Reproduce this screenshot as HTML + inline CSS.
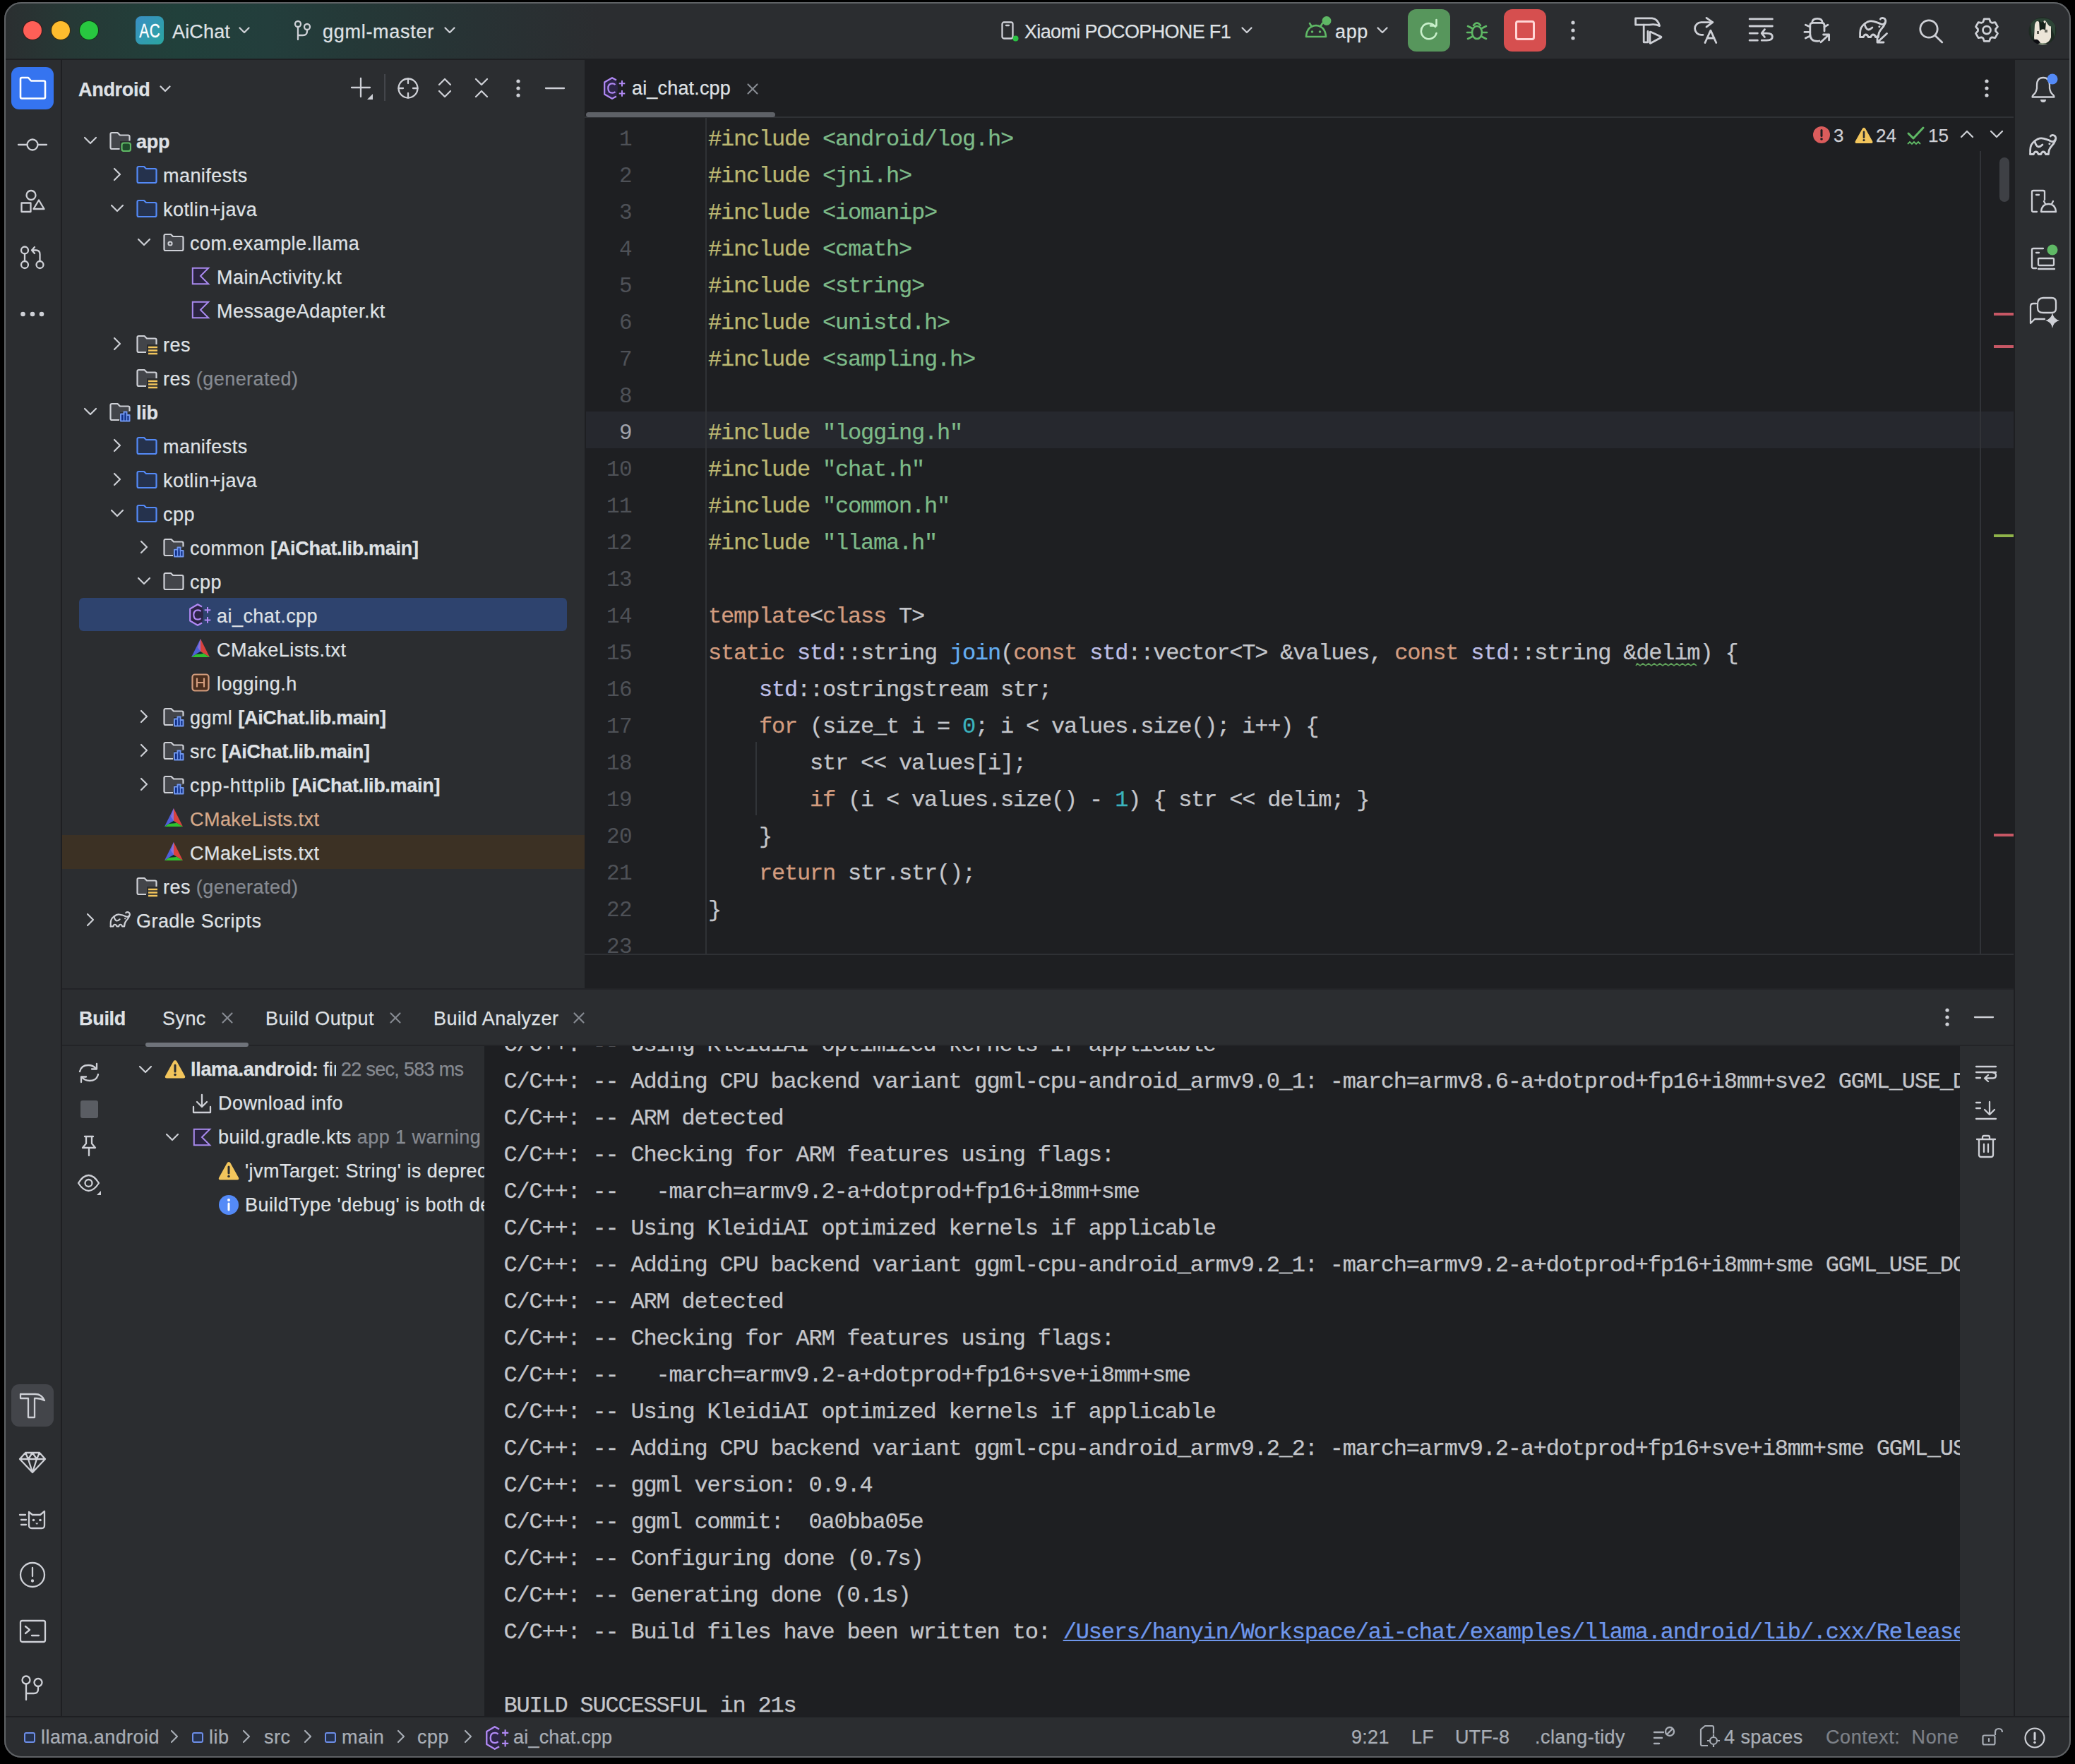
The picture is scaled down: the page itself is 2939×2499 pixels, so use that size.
<!DOCTYPE html>
<html><head><meta charset="utf-8">
<style>
*{box-sizing:border-box;margin:0;padding:0}
html,body{width:2939px;height:2499px;background:#000;overflow:hidden}
body{position:relative;font-family:"Liberation Sans",sans-serif;color:#DFE1E5}
#app{position:absolute;left:0;top:0;width:2939px;height:2499px;clip-path:inset(3px 6px 9px 6px round 24px);background:#2B2D30}
#frame{position:absolute;left:6px;top:3px;width:2927px;height:2487px;border:2px solid #5f6265;border-radius:24px;pointer-events:none}
.a{position:absolute}
.ui{font-family:"Liberation Sans",sans-serif;font-size:27px;letter-spacing:0.5px;white-space:pre;line-height:48px;-webkit-text-stroke:0.25px currentColor}
.mono{font-family:"Liberation Mono",monospace;font-size:32px;letter-spacing:-1.2px;white-space:pre;line-height:52px;-webkit-text-stroke:0.25px currentColor}
svg{position:absolute;overflow:visible}
.ic{fill:none;stroke:#CED0D6;stroke-width:2.3;stroke-linecap:round;stroke-linejoin:round}
</style></head><body>
<div id="app">
<!-- title bar -->
<div class="a" id="title" style="left:0;top:0;width:2939px;height:84px;background:linear-gradient(90deg,#2B2E30 0px,#263936 100px,#21403B 250px,#233E3C 380px,#253837 520px,#283234 680px,#2B2D30 850px)"></div>
<div class="a" style="left:0;top:83px;width:2939px;height:2px;background:#1E1F22"></div>
<!-- left strip -->
<div class="a" style="left:0;top:85px;width:86px;height:2346px;background:#2B2D30"></div>
<div class="a" style="left:86px;top:85px;width:2px;height:2346px;background:#1E1F22"></div>
<!-- project panel -->
<div class="a" style="left:88px;top:85px;width:740px;height:1314px;background:#2B2D30"></div>
<!-- editor -->
<div class="a" style="left:828px;top:85px;width:2024px;height:1315px;background:#1E1F22"></div>
<!-- right strip -->
<div class="a" style="left:2852px;top:85px;width:2px;height:2346px;background:#1E1F22"></div>
<div class="a" style="left:2854px;top:85px;width:85px;height:2346px;background:#2B2D30"></div>
<!-- build panel -->
<div class="a" style="left:88px;top:1400px;width:2764px;height:1031px;background:#2B2D30"></div>
<div class="a" style="left:686px;top:1482px;width:2090px;height:949px;background:#1E1F22"></div>
<!-- status bar -->
<div class="a" style="left:0;top:2431px;width:2939px;height:2px;background:#1E1F22"></div>
<div class="a" style="left:0;top:2433px;width:2939px;height:66px;background:#2B2D30"></div>
<!-- traffic lights -->
<div class="a" style="left:33px;top:30px;width:26px;height:26px;border-radius:50%;background:#FF5F57;box-shadow:0 0 0 1px #3a1b1a"></div>
<div class="a" style="left:73px;top:30px;width:26px;height:26px;border-radius:50%;background:#FEBC2E;box-shadow:0 0 0 1px #3a2c10"></div>
<div class="a" style="left:113px;top:30px;width:26px;height:26px;border-radius:50%;background:#28C840;box-shadow:0 0 0 1px #113a18"></div>
<!-- project icon -->
<div class="a" style="left:192px;top:23px;width:40px;height:40px;border-radius:8px;background:linear-gradient(135deg,#3A8EC4 0%,#2AA6A0 100%)"></div>
<div class="a" style="left:192px;top:24px;width:40px;height:40px;font:28px/40px 'Liberation Sans';color:#fff;text-align:center;letter-spacing:1px;transform:scaleX(0.74);-webkit-text-stroke:0.4px #fff">AC</div>
<div class="a ui" style="left:244px;top:22.5px;line-height:44px;letter-spacing:0.16px">AiChat</div>
<svg style="left:338px;top:38px" width="16" height="10"><path class="ic" d="M1.5 1.5 L8 8 L14.5 1.5" stroke-width="2.4"/></svg>
<svg style="left:416px;top:28px" width="26" height="30"><g class="ic" stroke-width="2.4"><circle cx="6" cy="6" r="4"/><circle cx="19" cy="10" r="4"/><path d="M6 10 V28 M6 22 H13 Q19 22 19 16 V14"/></g></svg>
<div class="a ui" style="left:457px;top:22.5px;line-height:44px;letter-spacing:0.72px">ggml-master</div>
<svg style="left:629px;top:38px" width="16" height="10"><path class="ic" d="M1.5 1.5 L8 8 L14.5 1.5" stroke-width="2.4"/></svg>
<!-- device -->
<svg style="left:1418px;top:30px" width="26" height="28"><rect class="ic" x="1.5" y="1.5" width="15" height="23" rx="2.5" stroke-width="2.4"/><path class="ic" d="M7 6 H11" stroke-width="2.2"/><circle cx="20.5" cy="24.5" r="4" fill="#2BC244"/></svg>
<div class="a ui" style="left:1451px;top:22.5px;line-height:44px;letter-spacing:-0.66px">Xiaomi POCOPHONE F1</div>
<svg style="left:1758px;top:38px" width="16" height="10"><path class="ic" d="M1.5 1.5 L8 8 L14.5 1.5" stroke-width="2.4"/></svg>
<!-- android app -->
<svg style="left:1846px;top:20px" width="40" height="36"><path d="M4 32 Q5 17 18 16 Q31 17 32 32 Z" fill="none" stroke="#5FB865" stroke-width="2.6" stroke-linejoin="round"/><path d="M9 13 L12 18 M27 13 L24 18" stroke="#5FB865" stroke-width="2.6" stroke-linecap="round"/><circle cx="12.5" cy="25" r="1.8" fill="#5FB865"/><circle cx="23.5" cy="25" r="1.8" fill="#5FB865"/><circle cx="33" cy="9.5" r="6.5" fill="#5FB865"/></svg>
<div class="a ui" style="left:1891px;top:22.5px;line-height:44px;letter-spacing:0.65px">app</div>
<svg style="left:1950px;top:38px" width="16" height="10"><path class="ic" d="M1.5 1.5 L8 8 L14.5 1.5" stroke-width="2.4"/></svg>
<!-- rerun -->
<div class="a" style="left:1994px;top:13px;width:60px;height:60px;border-radius:12px;background:#57965C"></div>
<svg style="left:1994px;top:13px" width="60" height="60"><path d="M39 25 A11 11 0 1 0 40.5 34" fill="none" stroke="#C9F0CB" stroke-width="2.6" stroke-linecap="round"/><path d="M32 23.5 H40.5 V15" fill="none" stroke="#C9F0CB" stroke-width="2.6" stroke-linecap="round" stroke-linejoin="round"/></svg>
<!-- debug -->
<svg style="left:2076px;top:27px" width="32" height="32"><g fill="none" stroke="#5FB865" stroke-width="2.6" stroke-linecap="round"><ellipse cx="16" cy="19" rx="7" ry="9"/><path d="M11 9 Q16 2 21 9"/><path d="M9 13 L3 10 M9 19 H2 M9 25 L3 28 M23 13 L29 10 M23 19 H30 M23 25 L29 28"/></g></svg>
<!-- stop -->
<div class="a" style="left:2130px;top:13px;width:60px;height:60px;border-radius:12px;background:#D64F4F"></div>
<div class="a" style="left:2146px;top:29px;width:28px;height:28px;border-radius:4px;border:3px solid #FFD6D6"></div>
<!-- kebab -->
<svg style="left:2220px;top:26px" width="16" height="34"><g fill="#CED0D6"><circle cx="8" cy="6" r="2.6"/><circle cx="8" cy="17" r="2.6"/><circle cx="8" cy="28" r="2.6"/></g></svg>
<!-- right title icons -->
<svg style="left:2312px;top:22px" width="46" height="44"><g class="ic" style="stroke-width:2.8"><path d="M4.6 13.2 V3.8 H28 Q36 4.5 38.6 14.7 Q32 11.5 24 13.2 Z"/><path d="M16.2 13.2 V37.8 H22 V22.5"/><path d="M24.9 24 Q24.9 22.6 26.2 23.3 L40.5 30 Q41.5 30.6 40.5 31.2 L26.2 39 Q24.9 39.7 24.9 38.3 Z"/></g></svg>
<svg style="left:2394px;top:22px" width="42" height="44"><g class="ic" style="stroke-width:2.8"><path d="M31.8 9.6 H15.5 A8.9 8.9 0 0 0 15.5 27.4 H18"/><path d="M23 3.4 L31.8 9.6 L23 16.1"/><path d="M21 38.5 L28.9 21.2 L36.8 38.5 M23.8 32 H34"/></g></svg>
<svg style="left:2474px;top:22px" width="42" height="44"><g class="ic" style="stroke-width:2.8"><path d="M4.1 4.9 H36.4 M4.1 15 H36.4 M4.1 25.1 H15.4 M4.1 35.2 H15.4"/><path d="M21.2 35.2 H28.4 Q36.4 35.2 36.4 30.1 Q36.4 25.1 28.4 25.1 H21.2 M25.5 19.7 L21.2 25.1 L25.5 30.5"/></g></svg>
<svg style="left:2552px;top:22px" width="44" height="44"><g class="ic" style="stroke-width:2.8"><path d="M14.7 10.3 Q14.7 4.3 22 4.3 Q29.2 4.3 29.2 10.3"/><path d="M32 22 V14 Q32 10.3 28 10.3 H16 Q11.8 10.3 11.8 14 V26 Q11.8 36.4 22 36.4 Q23.5 36.4 25 36"/><path d="M5.3 13.2 L11.8 16 M3.9 23.4 H11.8 M5.3 32 L11.8 29 M37 13.2 L32 16"/><path d="M27 37.8 L38.6 27 M30.6 27 H38.6 V34.9"/></g></svg>
<svg style="left:2631px;top:20px" width="44" height="40"><use href="#eleph"/></svg><svg style="left:2655px;top:44px" width="22" height="20"><path class="ic" style="stroke-width:2.8" d="M17.5 3.5 L4 16 M4 7.5 V16 H13"/></svg>
<svg style="left:2714px;top:22px" width="42" height="44"><g class="ic" style="stroke-width:2.8"><circle cx="18" cy="19" r="12.2"/><path d="M27.5 29 L36.8 37.9"/></g></svg>
<svg style="left:2792px;top:21px" width="44" height="44"><g class="ic" style="stroke-width:2.8"><path d="M16.88 10.09 L18.36 5.82 L25.64 5.82 L27.12 10.09 L29.41 11.41 L33.85 10.55 L37.49 16.86 L34.53 20.28 L34.53 22.92 L37.49 26.34 L33.85 32.65 L29.41 31.79 L27.12 33.11 L25.64 37.38 L18.36 37.38 L16.88 33.11 L14.59 31.79 L10.15 32.65 L6.51 26.34 L9.47 22.92 L9.47 20.28 L6.51 16.86 L10.15 10.55 L14.59 11.41 Z"/><circle cx="22" cy="21.6" r="5.5"/></g></svg>
<svg style="left:2872px;top:23px" width="42" height="42"><defs><clipPath id="avc"><circle cx="21" cy="21" r="19.5"/></clipPath></defs><g clip-path="url(#avc)"><rect width="42" height="42" fill="#1E2A22"/><path d="M4 10 Q10 2 21 3 Q33 2 39 12 V30 Q35 20 32 14 Q27 22 25 6 Q20 18 14 8 Q10 20 6 30 Z" fill="#2D4436"/><path d="M10 12 Q12 5 16 8 Q19 16 21 9 Q24 3 27 9 Q31 16 33 14 V30 Q31 36 26 38 H14 Q9 35 9 30 Z" fill="#ECE5D8"/><path d="M16 5 Q20 12 22 6 Q24 14 26 7 L25 20 Q21 16 17 21 Z" fill="#16221A"/><rect x="13" y="21" width="3" height="4" fill="#5a5a50"/><rect x="24" y="19" width="4" height="4" fill="#6a6a60"/><path d="M8 34 Q14 30 18 38 L10 42 Z" fill="#0d0d12"/><path d="M12 40 Q21 36 30 40 V42 H12 Z" fill="#9aa890"/></g></svg>
<svg width="0" height="0" style="position:absolute"><defs>
<symbol id="fBlue" viewBox="0 0 32 32"><path d="M2.5 7 Q2.5 5 4.5 5 H12 L15 8 H27.5 Q29.5 8 29.5 10 V26 Q29.5 28 27.5 28 H4.5 Q2.5 28 2.5 26 Z" fill="#25324D" stroke="#548AF7" stroke-width="2.2" stroke-linejoin="round"/></symbol>
<symbol id="fGrey" viewBox="0 0 32 32"><path d="M2.5 7 Q2.5 5 4.5 5 H12 L15 8 H27.5 Q29.5 8 29.5 10 V26 Q29.5 28 27.5 28 H4.5 Q2.5 28 2.5 26 Z" fill="#43454A" stroke="#CED0D6" stroke-width="2.2" stroke-linejoin="round"/></symbol>
<symbol id="fModG" viewBox="0 0 32 32"><path d="M2.5 7 Q2.5 5 4.5 5 H12.5 L16 8.5 H27.5 Q29.5 8.5 29.5 10.5 V17 H16 V28 H4.5 Q2.5 28 2.5 26 Z" fill="#43454A"/><path d="M15.5 28 H4.5 Q2.5 28 2.5 26 V7 Q2.5 5 4.5 5 H12.5 L16 8.5 H27.5 Q29.5 8.5 29.5 10.5 V16.5" fill="none" stroke="#CED0D6" stroke-width="2.2" stroke-linejoin="round"/><rect x="18.5" y="19.5" width="12.5" height="11.5" rx="3" fill="#1F4A2B" stroke="#5FB865" stroke-width="2.2"/></symbol>
<symbol id="fModB" viewBox="0 0 32 32"><path d="M2.5 7 Q2.5 5 4.5 5 H12.5 L16 8.5 H27.5 Q29.5 8.5 29.5 10.5 V17 H16 V28 H4.5 Q2.5 28 2.5 26 Z" fill="#43454A"/><path d="M15 28 H4.5 Q2.5 28 2.5 26 V7 Q2.5 5 4.5 5 H12.5 L16 8.5 H27.5 Q29.5 8.5 29.5 10.5 V15.5" fill="none" stroke="#CED0D6" stroke-width="2.2" stroke-linejoin="round"/><path d="M17 29.5 V19.5 H21.5 V16.5 H25.5 V21 H29.5 V29.5 Z" fill="#0F2E85" stroke="#7096EE" stroke-width="2" stroke-linejoin="round"/><path d="M21.5 19.5 V29 M25.5 21 V29" stroke="#7096EE" stroke-width="1.6"/></symbol>
<symbol id="fRes" viewBox="0 0 32 32"><path d="M2.5 7 Q2.5 5 4.5 5 H12.5 L16 8.5 H27.5 Q29.5 8.5 29.5 10.5 V17 H16 V28 H4.5 Q2.5 28 2.5 26 Z" fill="#43454A"/><path d="M15 28 H4.5 Q2.5 28 2.5 26 V7 Q2.5 5 4.5 5 H12.5 L16 8.5 H27.5 Q29.5 8.5 29.5 10.5 V17" fill="none" stroke="#CED0D6" stroke-width="2.2" stroke-linejoin="round"/><path d="M18 21 H31 M18 25.5 H31 M18 30 H31" stroke="#F2C55C" stroke-width="2.4"/></symbol>
<symbol id="fPkg" viewBox="0 0 32 32"><path d="M2.5 7 Q2.5 5 4.5 5 H12 L15 8 H27.5 Q29.5 8 29.5 10 V26 Q29.5 28 27.5 28 H4.5 Q2.5 28 2.5 26 Z" fill="#43454A" stroke="#CED0D6" stroke-width="2.2" stroke-linejoin="round"/><circle cx="11" cy="18" r="2.6" fill="none" stroke="#CED0D6" stroke-width="2"/></symbol>
<symbol id="kt" viewBox="0 0 32 32"><path d="M4.8 4.8 H27.2 L16 16 L27.2 27.2 H4.8 Z" fill="#2A2340" stroke="#A98AEE" stroke-width="2" stroke-linejoin="miter"/></symbol>
<symbol id="cpp" viewBox="0 0 32 32"><path d="M18 4.5 L12 1.2 L1.2 7.5 V24.5 L12 30.8 L18 27.5 Q20 20 20 16 Q20 10 18 4.5 Z" fill="#2C2446"/><path d="M18 4.5 L12 1.2 L1.2 7.5 V24.5 L12 30.8 L18 27.5" fill="none" stroke="#B189F5" stroke-width="2.2" stroke-linejoin="round"/><path d="M16.5 11 Q15 9.3 12.3 9.3 Q6.3 9.3 6.3 16 Q6.3 22.7 12.3 22.7 Q15 22.7 16.5 21" fill="none" stroke="#B189F5" stroke-width="2.2"/><path d="M26 5 V13.6 M21.7 9.3 H30.3 M26 19.1 V27.7 M21.7 23.4 H30.3" stroke="#B189F5" stroke-width="2"/></symbol>
<symbol id="cmake" viewBox="0 0 32 32"><path d="M16 2 L3 28 L16 20 Z" fill="#4F5FD8"/><path d="M16 2 L16 20 L29 28 Z" fill="#D9423E"/><path d="M3 28 L16 20 L29 28 Z" fill="#2FC12F"/><path d="M16 2 L12 14 L16 20 Z" fill="#8A6FD6"/><path d="M16 20 L9 24 L20 23 Z" fill="#123"/></symbol>
<symbol id="hdr" viewBox="0 0 32 32"><rect x="4.5" y="4.5" width="23" height="23" rx="3.5" fill="#4A2E1E" stroke="#D39C7C" stroke-width="2.2"/><path d="M11 9.5 V22.5 M21 9.5 V22.5 M11 16 H21" stroke="#D39C7C" stroke-width="2.2"/></symbol>
<symbol id="chR" viewBox="0 0 32 32"><path d="M12 8 L20 16 L12 24" fill="none" stroke="#CED0D6" stroke-width="2.2" stroke-linecap="round" stroke-linejoin="round"/></symbol>
<symbol id="chD" viewBox="0 0 32 32"><path d="M8 12 L16 20 L24 12" fill="none" stroke="#CED0D6" stroke-width="2.2" stroke-linecap="round" stroke-linejoin="round"/></symbol>
<symbol id="eleph" viewBox="0 0 44 40"><g fill="none" stroke="#CED0D6" stroke-width="2.8" stroke-linecap="round" stroke-linejoin="round"><path d="M3.6 32.5 V26.6 Q3.6 18 9.9 13.8 Q15 9.5 19.5 9.9 Q26 10.5 33.7 14.4 Q38 15.5 39.9 9.9 Q39.5 5.5 35 5.3 Q33 5.5 32.3 7"/><path d="M39.5 12 Q37.5 17.5 33 22 Q29.5 26 29.5 32.5 H25.6 Q24.5 29 22 29 Q19.8 29 18.9 32.5 H15.3 Q14 29 11.6 29 Q9.3 29 8.4 32.5 H3.6"/><path d="M9.9 13.8 Q11.5 21 15 22 Q18 22 20.9 19"/></g><circle cx="30.9" cy="17.8" r="1.5" fill="#CED0D6"/></symbol>
<symbol id="gradle" viewBox="0 0 32 32"><use href="#eleph" x="0" y="1" width="33" height="30"/></symbol>
<symbol id="warn" viewBox="0 0 32 32"><path d="M16 3 Q17.5 3 18.5 4.8 L30 25.5 Q31 28.5 28 28.5 H4 Q1 28.5 2 25.5 L13.5 4.8 Q14.5 3 16 3 Z" fill="#F2C55C"/><path d="M16 10 V19" stroke="#2B2D30" stroke-width="3" stroke-linecap="round"/><circle cx="16" cy="23.5" r="1.8" fill="#2B2D30"/></symbol>
</defs></svg>
<div class="a ui" style="left:111px;top:102.5px;font-weight:bold;letter-spacing:-0.3px">Android</div>
<svg style="left:226px;top:121px" width="16" height="10"><path class="ic" d="M1.5 1.5 L8 8 L14.5 1.5" stroke-width="2.4"/></svg>
<svg style="left:496px;top:108px" width="36" height="38"><path class="ic" d="M2 16 H28 M15 3 V29"/><path d="M24 33 L32 33 L32 25 Z" fill="#CED0D6"/></svg>
<div class="a" style="left:544px;top:105px;width:2px;height:38px;background:#43454A"></div>
<svg style="left:562px;top:109px" width="32" height="32"><g class="ic"><circle cx="16" cy="16" r="13.5"/><path d="M16 2.5 V9 M16 23 V29.5 M2.5 16 H9 M23 16 H29.5"/></g></svg>
<svg style="left:618px;top:109px" width="24" height="32"><path class="ic" d="M4 11 L12 3 L20 11 M4 20 L12 28 L20 20"/></svg>
<svg style="left:670px;top:109px" width="24" height="32"><path class="ic" d="M4 3 L12 11 L20 3 M4 28 L12 20 L20 28"/></svg>
<svg style="left:726px;top:109px" width="16" height="32"><g fill="#CED0D6"><circle cx="8" cy="6" r="2.6"/><circle cx="8" cy="16" r="2.6"/><circle cx="8" cy="26" r="2.6"/></g></svg>
<svg style="left:770px;top:120px" width="32" height="10"><path class="ic" d="M3 5 H29"/></svg>
<div class="a" style="left:112px;top:847px;width:691px;height:47px;border-radius:6px;background:#2E436E"></div>
<div class="a" style="left:88px;top:1183px;width:740px;height:48px;background:#3C3124"></div>
<svg style="left:112px;top:183px" width="32" height="32"><use href="#chD"/></svg>
<svg style="left:154px;top:183px" width="32" height="32"><use href="#fModG"/></svg>
<div class="a ui" style="left:193px;top:176.5px;letter-spacing:0.45px"><b style="letter-spacing:-0.3px">app</b></div>
<svg style="left:150px;top:231px" width="32" height="32"><use href="#chR"/></svg>
<svg style="left:192px;top:231px" width="32" height="32"><use href="#fBlue"/></svg>
<div class="a ui" style="left:231px;top:224.5px;letter-spacing:0.45px">manifests</div>
<svg style="left:150px;top:279px" width="32" height="32"><use href="#chD"/></svg>
<svg style="left:192px;top:279px" width="32" height="32"><use href="#fBlue"/></svg>
<div class="a ui" style="left:231px;top:272.5px;letter-spacing:0.45px">kotlin+java</div>
<svg style="left:188px;top:327px" width="32" height="32"><use href="#chD"/></svg>
<svg style="left:230px;top:327px" width="32" height="32"><use href="#fPkg"/></svg>
<div class="a ui" style="left:269px;top:320.5px;letter-spacing:0.45px">com.example.llama</div>
<svg style="left:268px;top:375px" width="32" height="32"><use href="#kt"/></svg>
<div class="a ui" style="left:307px;top:368.5px;letter-spacing:0.45px">MainActivity.kt</div>
<svg style="left:268px;top:423px" width="32" height="32"><use href="#kt"/></svg>
<div class="a ui" style="left:307px;top:416.5px;letter-spacing:0.45px">MessageAdapter.kt</div>
<svg style="left:150px;top:471px" width="32" height="32"><use href="#chR"/></svg>
<svg style="left:192px;top:471px" width="32" height="32"><use href="#fRes"/></svg>
<div class="a ui" style="left:231px;top:464.5px;letter-spacing:0.45px">res</div>
<svg style="left:192px;top:519px" width="32" height="32"><use href="#fRes"/></svg>
<div class="a ui" style="left:231px;top:512.5px;letter-spacing:0.45px">res<span style="color:#868A91"> (generated)</span></div>
<svg style="left:112px;top:567px" width="32" height="32"><use href="#chD"/></svg>
<svg style="left:154px;top:567px" width="32" height="32"><use href="#fModB"/></svg>
<div class="a ui" style="left:193px;top:560.5px;letter-spacing:0.45px"><b style="letter-spacing:-0.3px">lib</b></div>
<svg style="left:150px;top:615px" width="32" height="32"><use href="#chR"/></svg>
<svg style="left:192px;top:615px" width="32" height="32"><use href="#fBlue"/></svg>
<div class="a ui" style="left:231px;top:608.5px;letter-spacing:0.45px">manifests</div>
<svg style="left:150px;top:663px" width="32" height="32"><use href="#chR"/></svg>
<svg style="left:192px;top:663px" width="32" height="32"><use href="#fBlue"/></svg>
<div class="a ui" style="left:231px;top:656.5px;letter-spacing:0.45px">kotlin+java</div>
<svg style="left:150px;top:711px" width="32" height="32"><use href="#chD"/></svg>
<svg style="left:192px;top:711px" width="32" height="32"><use href="#fBlue"/></svg>
<div class="a ui" style="left:231px;top:704.5px;letter-spacing:0.45px">cpp</div>
<svg style="left:188px;top:759px" width="32" height="32"><use href="#chR"/></svg>
<svg style="left:230px;top:759px" width="32" height="32"><use href="#fModB"/></svg>
<div class="a ui" style="left:269px;top:752.5px;letter-spacing:0.45px">common <b style="letter-spacing:-0.3px">[AiChat.lib.main]</b></div>
<svg style="left:188px;top:807px" width="32" height="32"><use href="#chD"/></svg>
<svg style="left:230px;top:807px" width="32" height="32"><use href="#fGrey"/></svg>
<div class="a ui" style="left:269px;top:800.5px;letter-spacing:0.45px">cpp</div>
<svg style="left:268px;top:855px" width="32" height="32"><use href="#cpp"/></svg>
<div class="a ui" style="left:307px;top:848.5px;letter-spacing:0.45px">ai_chat.cpp</div>
<svg style="left:268px;top:903px" width="32" height="32"><use href="#cmake"/></svg>
<div class="a ui" style="left:307px;top:896.5px;letter-spacing:0.45px">CMakeLists.txt</div>
<svg style="left:268px;top:951px" width="32" height="32"><use href="#hdr"/></svg>
<div class="a ui" style="left:307px;top:944.5px;letter-spacing:0.45px">logging.h</div>
<svg style="left:188px;top:999px" width="32" height="32"><use href="#chR"/></svg>
<svg style="left:230px;top:999px" width="32" height="32"><use href="#fModB"/></svg>
<div class="a ui" style="left:269px;top:992.5px;letter-spacing:0.45px">ggml <b style="letter-spacing:-0.3px">[AiChat.lib.main]</b></div>
<svg style="left:188px;top:1047px" width="32" height="32"><use href="#chR"/></svg>
<svg style="left:230px;top:1047px" width="32" height="32"><use href="#fModB"/></svg>
<div class="a ui" style="left:269px;top:1040.5px;letter-spacing:0.45px">src <b style="letter-spacing:-0.3px">[AiChat.lib.main]</b></div>
<svg style="left:188px;top:1095px" width="32" height="32"><use href="#chR"/></svg>
<svg style="left:230px;top:1095px" width="32" height="32"><use href="#fModB"/></svg>
<div class="a ui" style="left:269px;top:1088.5px;letter-spacing:0.45px"><span style="letter-spacing:1.05px">cpp-httplib </span><b style="letter-spacing:-0.3px">[AiChat.lib.main]</b></div>
<svg style="left:230px;top:1143px" width="32" height="32"><use href="#cmake"/></svg>
<div class="a ui" style="left:269px;top:1136.5px;letter-spacing:0.45px"><span style="color:#D5A98A">CMakeLists.txt</span></div>
<svg style="left:230px;top:1191px" width="32" height="32"><use href="#cmake"/></svg>
<div class="a ui" style="left:269px;top:1184.5px;letter-spacing:0.45px">CMakeLists.txt</div>
<svg style="left:192px;top:1239px" width="32" height="32"><use href="#fRes"/></svg>
<div class="a ui" style="left:231px;top:1232.5px;letter-spacing:0.45px">res<span style="color:#868A91"> (generated)</span></div>
<svg style="left:112px;top:1287px" width="32" height="32"><use href="#chR"/></svg>
<svg style="left:154px;top:1287px" width="32" height="32"><use href="#gradle"/></svg>
<div class="a ui" style="left:193px;top:1280.5px;letter-spacing:0.45px">Gradle Scripts</div>
<div class="a" style="left:830px;top:583px;width:2022px;height:52px;background:#26282E"></div>
<svg style="left:855px;top:109px" width="32" height="32"><use href="#cpp"/></svg>
<div class="a ui" style="left:895px;top:101px;letter-spacing:0.17px">ai_chat.cpp</div>
<svg style="left:1058px;top:118px" width="16" height="16"><path d="M1.5 1.5 L14.5 14.5 M14.5 1.5 L1.5 14.5" stroke="#868A91" stroke-width="2.2" stroke-linecap="round"/></svg>
<div class="a" style="left:828px;top:165px;width:2024px;height:2px;background:#2F3135"></div>
<div class="a" style="left:830px;top:159px;width:268px;height:7px;border-radius:4px;background:#5E6167"></div>
<svg style="left:2806px;top:107px" width="16" height="34"><g fill="#CED0D6"><circle cx="8" cy="8" r="2.6"/><circle cx="8" cy="18" r="2.6"/><circle cx="8" cy="28" r="2.6"/></g></svg>
<div class="a" style="left:999px;top:167px;width:2px;height:1185px;background:#2F3135"></div>
<div class="a" style="left:2804px;top:214px;width:2px;height:1138px;background:#313338"></div>
<div class="a" style="left:828px;top:1351px;width:2024px;height:2px;background:#2F3135"></div>
<div class="a" style="left:1070px;top:1051px;width:2px;height:104px;background:#313438"></div>
<div class="a mono" style="left:835px;top:172px;width:60px;text-align:right;color:#4E5157;font-size:31px;letter-spacing:-0.6px;-webkit-text-stroke:0">1</div>
<div class="a mono" style="left:1003px;top:172px;color:#C4C6CB"><span style="color:#BDB872">#include</span><span style="color:#C4C6CB"> </span><span style="color:#7DBA88">&lt;android/log.h&gt;</span></div>
<div class="a mono" style="left:835px;top:224px;width:60px;text-align:right;color:#4E5157;font-size:31px;letter-spacing:-0.6px;-webkit-text-stroke:0">2</div>
<div class="a mono" style="left:1003px;top:224px;color:#C4C6CB"><span style="color:#BDB872">#include</span><span style="color:#C4C6CB"> </span><span style="color:#7DBA88">&lt;jni.h&gt;</span></div>
<div class="a mono" style="left:835px;top:276px;width:60px;text-align:right;color:#4E5157;font-size:31px;letter-spacing:-0.6px;-webkit-text-stroke:0">3</div>
<div class="a mono" style="left:1003px;top:276px;color:#C4C6CB"><span style="color:#BDB872">#include</span><span style="color:#C4C6CB"> </span><span style="color:#7DBA88">&lt;iomanip&gt;</span></div>
<div class="a mono" style="left:835px;top:328px;width:60px;text-align:right;color:#4E5157;font-size:31px;letter-spacing:-0.6px;-webkit-text-stroke:0">4</div>
<div class="a mono" style="left:1003px;top:328px;color:#C4C6CB"><span style="color:#BDB872">#include</span><span style="color:#C4C6CB"> </span><span style="color:#7DBA88">&lt;cmath&gt;</span></div>
<div class="a mono" style="left:835px;top:380px;width:60px;text-align:right;color:#4E5157;font-size:31px;letter-spacing:-0.6px;-webkit-text-stroke:0">5</div>
<div class="a mono" style="left:1003px;top:380px;color:#C4C6CB"><span style="color:#BDB872">#include</span><span style="color:#C4C6CB"> </span><span style="color:#7DBA88">&lt;string&gt;</span></div>
<div class="a mono" style="left:835px;top:432px;width:60px;text-align:right;color:#4E5157;font-size:31px;letter-spacing:-0.6px;-webkit-text-stroke:0">6</div>
<div class="a mono" style="left:1003px;top:432px;color:#C4C6CB"><span style="color:#BDB872">#include</span><span style="color:#C4C6CB"> </span><span style="color:#7DBA88">&lt;unistd.h&gt;</span></div>
<div class="a mono" style="left:835px;top:484px;width:60px;text-align:right;color:#4E5157;font-size:31px;letter-spacing:-0.6px;-webkit-text-stroke:0">7</div>
<div class="a mono" style="left:1003px;top:484px;color:#C4C6CB"><span style="color:#BDB872">#include</span><span style="color:#C4C6CB"> </span><span style="color:#7DBA88">&lt;sampling.h&gt;</span></div>
<div class="a mono" style="left:835px;top:536px;width:60px;text-align:right;color:#4E5157;font-size:31px;letter-spacing:-0.6px;-webkit-text-stroke:0">8</div>
<div class="a mono" style="left:835px;top:588px;width:60px;text-align:right;color:#A1A3AB;font-size:31px;letter-spacing:-0.6px;-webkit-text-stroke:0">9</div>
<div class="a mono" style="left:1003px;top:588px;color:#C4C6CB"><span style="color:#BDB872">#include</span><span style="color:#C4C6CB"> </span><span style="color:#7DBA88">&quot;logging.h&quot;</span></div>
<div class="a mono" style="left:835px;top:640px;width:60px;text-align:right;color:#4E5157;font-size:31px;letter-spacing:-0.6px;-webkit-text-stroke:0">10</div>
<div class="a mono" style="left:1003px;top:640px;color:#C4C6CB"><span style="color:#BDB872">#include</span><span style="color:#C4C6CB"> </span><span style="color:#7DBA88">&quot;chat.h&quot;</span></div>
<div class="a mono" style="left:835px;top:692px;width:60px;text-align:right;color:#4E5157;font-size:31px;letter-spacing:-0.6px;-webkit-text-stroke:0">11</div>
<div class="a mono" style="left:1003px;top:692px;color:#C4C6CB"><span style="color:#BDB872">#include</span><span style="color:#C4C6CB"> </span><span style="color:#7DBA88">&quot;common.h&quot;</span></div>
<div class="a mono" style="left:835px;top:744px;width:60px;text-align:right;color:#4E5157;font-size:31px;letter-spacing:-0.6px;-webkit-text-stroke:0">12</div>
<div class="a mono" style="left:1003px;top:744px;color:#C4C6CB"><span style="color:#BDB872">#include</span><span style="color:#C4C6CB"> </span><span style="color:#7DBA88">&quot;llama.h&quot;</span></div>
<div class="a mono" style="left:835px;top:796px;width:60px;text-align:right;color:#4E5157;font-size:31px;letter-spacing:-0.6px;-webkit-text-stroke:0">13</div>
<div class="a mono" style="left:835px;top:848px;width:60px;text-align:right;color:#4E5157;font-size:31px;letter-spacing:-0.6px;-webkit-text-stroke:0">14</div>
<div class="a mono" style="left:1003px;top:848px;color:#C4C6CB"><span style="color:#D39C7F">template</span><span style="color:#C4C6CB">&lt;</span><span style="color:#D39C7F">class</span><span style="color:#C4C6CB"> T&gt;</span></div>
<div class="a mono" style="left:835px;top:900px;width:60px;text-align:right;color:#4E5157;font-size:31px;letter-spacing:-0.6px;-webkit-text-stroke:0">15</div>
<div class="a mono" style="left:1003px;top:900px;color:#C4C6CB"><span style="color:#D39C7F">static</span><span style="color:#C4C6CB"> </span><span style="color:#BFBFE6">std</span><span style="color:#C4C6CB">::string </span><span style="color:#65AEF2">join</span><span style="color:#C4C6CB">(</span><span style="color:#D39C7F">const</span><span style="color:#C4C6CB"> </span><span style="color:#BFBFE6">std</span><span style="color:#C4C6CB">::vector&lt;T&gt; &amp;values, </span><span style="color:#D39C7F">const</span><span style="color:#C4C6CB"> </span><span style="color:#BFBFE6">std</span><span style="color:#C4C6CB">::string &amp;delim) {</span></div>
<div class="a mono" style="left:835px;top:952px;width:60px;text-align:right;color:#4E5157;font-size:31px;letter-spacing:-0.6px;-webkit-text-stroke:0">16</div>
<div class="a mono" style="left:1003px;top:952px;color:#C4C6CB"><span style="color:#C4C6CB">    </span><span style="color:#BFBFE6">std</span><span style="color:#C4C6CB">::ostringstream str;</span></div>
<div class="a mono" style="left:835px;top:1004px;width:60px;text-align:right;color:#4E5157;font-size:31px;letter-spacing:-0.6px;-webkit-text-stroke:0">17</div>
<div class="a mono" style="left:1003px;top:1004px;color:#C4C6CB"><span style="color:#C4C6CB">    </span><span style="color:#D39C7F">for</span><span style="color:#C4C6CB"> (size_t i = </span><span style="color:#3BB3BE">0</span><span style="color:#C4C6CB">; i &lt; values.size(); i++) {</span></div>
<div class="a mono" style="left:835px;top:1056px;width:60px;text-align:right;color:#4E5157;font-size:31px;letter-spacing:-0.6px;-webkit-text-stroke:0">18</div>
<div class="a mono" style="left:1003px;top:1056px;color:#C4C6CB"><span style="color:#C4C6CB">        str &lt;&lt; values[i];</span></div>
<div class="a mono" style="left:835px;top:1108px;width:60px;text-align:right;color:#4E5157;font-size:31px;letter-spacing:-0.6px;-webkit-text-stroke:0">19</div>
<div class="a mono" style="left:1003px;top:1108px;color:#C4C6CB"><span style="color:#C4C6CB">        </span><span style="color:#D39C7F">if</span><span style="color:#C4C6CB"> (i &lt; values.size() - </span><span style="color:#3BB3BE">1</span><span style="color:#C4C6CB">) { str &lt;&lt; delim; }</span></div>
<div class="a mono" style="left:835px;top:1160px;width:60px;text-align:right;color:#4E5157;font-size:31px;letter-spacing:-0.6px;-webkit-text-stroke:0">20</div>
<div class="a mono" style="left:1003px;top:1160px;color:#C4C6CB"><span style="color:#C4C6CB">    }</span></div>
<div class="a mono" style="left:835px;top:1212px;width:60px;text-align:right;color:#4E5157;font-size:31px;letter-spacing:-0.6px;-webkit-text-stroke:0">21</div>
<div class="a mono" style="left:1003px;top:1212px;color:#C4C6CB"><span style="color:#C4C6CB">    </span><span style="color:#D39C7F">return</span><span style="color:#C4C6CB"> str.str();</span></div>
<div class="a mono" style="left:835px;top:1264px;width:60px;text-align:right;color:#4E5157;font-size:31px;letter-spacing:-0.6px;-webkit-text-stroke:0">22</div>
<div class="a mono" style="left:1003px;top:1264px;color:#C4C6CB"><span style="color:#C4C6CB">}</span></div>
<div class="a mono" style="left:835px;top:1316px;width:60px;text-align:right;color:#4E5157;font-size:31px;letter-spacing:-0.6px;-webkit-text-stroke:0">23</div>
<svg style="left:2317px;top:939px" width="90" height="6"><path d="M0 4 L2 1 L6 4 L10 1 L14 4 L18 1 L22 4 L26 1 L30 4 L34 1 L38 4 L42 1 L46 4 L50 1 L54 4 L58 1 L62 4 L66 1 L70 4 L74 1 L78 4 L82 1 L86 4" fill="none" stroke="#5FA05A" stroke-width="1.6"/></svg>
<svg style="left:2567px;top:178px" width="28" height="28"><circle cx="13" cy="13" r="12" fill="#DB5C5C"/><path d="M13 6.5 V14.5" stroke="#1E1F22" stroke-width="3" stroke-linecap="round"/><circle cx="13" cy="19" r="1.8" fill="#1E1F22"/></svg>
<div class="a ui" style="left:2597px;top:168px;color:#CED0D6;letter-spacing:0px;font-size:26px">3</div>
<svg style="left:2625px;top:178px" width="30" height="28"><use href="#warn" width="30" height="28"/></svg>
<div class="a ui" style="left:2657px;top:168px;color:#CED0D6;letter-spacing:0px;font-size:26px">24</div>
<svg style="left:2700px;top:178px" width="28" height="30"><path d="M3 11 L10 18 L24 3" fill="none" stroke="#5FB865" stroke-width="3" stroke-linecap="round" stroke-linejoin="round"/><path d="M2 26 L5 23 L8 26 L11 23 L14 26 L17 23 L20 26" fill="none" stroke="#5FB865" stroke-width="1.8"/></svg>
<div class="a ui" style="left:2731px;top:168px;color:#CED0D6;letter-spacing:0px;font-size:26px">15</div>
<svg style="left:2776px;top:184px" width="20" height="12"><path class="ic" d="M2 10 L10 2 L18 10" stroke-width="2.2"/></svg>
<svg style="left:2818px;top:184px" width="20" height="12"><path class="ic" d="M2 2 L10 10 L18 2" stroke-width="2.2"/></svg>
<div class="a" style="left:2832px;top:223px;width:14px;height:63px;border-radius:7px;background:#3E4045"></div>
<div class="a" style="left:2824px;top:443px;width:28px;height:4px;background:#C75765"></div>
<div class="a" style="left:2824px;top:489px;width:28px;height:4px;background:#C75765"></div>
<div class="a" style="left:2824px;top:757px;width:28px;height:4px;background:#8FB34A"></div>
<div class="a" style="left:2824px;top:1181px;width:28px;height:4px;background:#C75765"></div>
<!-- left strip top -->
<div class="a" style="left:16px;top:95px;width:60px;height:60px;border-radius:11px;background:#3574F0"></div>
<svg style="left:26px;top:105px" width="40" height="40"><path d="M3 7 Q3 5 5 5 H14 L18 9.5 H36 Q38 9.5 38 11.5 V32.5 Q38 34.5 36 34.5 H5 Q3 34.5 3 32.5 Z" fill="none" stroke="#FFFFFF" stroke-width="2.6" stroke-linejoin="round"/></svg>
<svg style="left:24px;top:193px" width="44" height="24"><g class="ic"><circle cx="22" cy="12" r="7.5"/><path d="M2 12 H14.5 M29.5 12 H42"/></g></svg>
<svg style="left:26px;top:264px" width="40" height="40"><g class="ic"><circle cx="18" cy="12.5" r="6.5"/><rect x="4.5" y="23.5" width="13" height="12.5"/><path d="M29 19.5 L36.5 32 H21.5 Z"/></g></svg>
<svg style="left:26px;top:344px" width="40" height="40"><g class="ic"><circle cx="9" cy="10.5" r="5"/><circle cx="9" cy="31" r="5"/><circle cx="30.5" cy="31" r="5"/><path d="M9 15.5 V26 M30.5 26 V16 Q30.5 10.5 25 10.5 H19 M23 6 L19 10.5 L23 15"/></g></svg>
<svg style="left:26px;top:435px" width="40" height="20"><g fill="#CED0D6"><circle cx="6.5" cy="10" r="3.3"/><circle cx="20" cy="10" r="3.3"/><circle cx="33" cy="10" r="3.3"/></g></svg>
<!-- left strip bottom -->
<div class="a" style="left:16px;top:1961px;width:60px;height:60px;border-radius:11px;background:#43454A"></div>
<svg style="left:26px;top:1971px" width="40" height="40"><path class="ic" d="M3 4 H24 Q33 4 37 13 Q32 10 26 10 H23 V37 H14 V10 H3 Z" stroke-width="2.4"/></svg>
<svg style="left:26px;top:2052px" width="40" height="40"><g class="ic" stroke-width="2.4"><path d="M10 6 H30 L38 15 L20 34 L2 15 Z M2 15 H38 M14 15 L20 34 L26 15 M10 6 L14 15 L20 6 L26 15 L30 6"/></g></svg>
<svg style="left:26px;top:2132px" width="40" height="40"><g class="ic" stroke-width="2.4"><path d="M15 10 L20 14 H31 L37 9 V29 Q37 33 33 33 H19 Q15 33 15 29 Z"/><path d="M2 14 H10 M4 21 H11 M4 28 H11"/></g><circle cx="21.5" cy="21.5" r="1.8" fill="#CED0D6"/><circle cx="31" cy="21.5" r="1.8" fill="#CED0D6"/><path d="M24 25.5 H28.5 L26.2 28 Z" fill="#CED0D6"/></svg>
<svg style="left:26px;top:2211px" width="40" height="40"><g class="ic" stroke-width="2.4"><circle cx="20" cy="20" r="17"/><path d="M20 10 V22"/><circle cx="20" cy="28.5" r="1"/></g></svg>
<svg style="left:26px;top:2291px" width="40" height="40"><g class="ic" stroke-width="2.4"><rect x="3" y="5" width="35" height="30" rx="2.5"/><path d="M10 13 L16 18 L10 23 M19 26 H29"/></g></svg>
<svg style="left:26px;top:2365px" width="40" height="50"><g class="ic" stroke-width="2.4"><circle cx="11" cy="15" r="5.5"/><circle cx="28" cy="18.5" r="5.5"/><path d="M11 20.5 V43 M11 34 H22 Q28 34 28 28 V24"/></g></svg>
<!-- right strip -->
<svg style="left:2874px;top:104px" width="44" height="44"><g class="ic" stroke-width="2.6"><path d="M4.5 33.5 Q4.5 31.5 6.5 30 Q10 27 11 21 V17 Q11 6 20 6 Q29 6 29 17 V21 Q30 27 33.5 30 Q35.5 31.5 35.5 33.5 Z"/></g><path d="M16 37 H24 Q24 41 20 41 Q16 41 16 37 Z" fill="#CED0D6"/><circle cx="33" cy="8" r="7.5" fill="#548AF7"/></svg>
<svg style="left:2872px;top:186px" width="44" height="40"><use href="#eleph"/></svg>
<svg style="left:2874px;top:265px" width="44" height="40"><g class="ic" stroke-width="2.4"><path d="M11 35 H6 Q4 35 4 33 V7 Q4 5 6 5 H20 Q22 5 22 7 V18"/><path d="M10 11 H14"/><path d="M17 35 Q18 24 27.5 24 Q37 24 38 35 Z M21 20 L23 24 M34 20 L32 24"/></g></svg>
<svg style="left:2874px;top:344px" width="44" height="44"><g class="ic" stroke-width="2.4"><path d="M10 36 H6 Q4 36 4 34 V10 Q4 8 6 8 H20"/><path d="M10 14 H14"/><rect x="13" y="22" width="22" height="10" rx="1"/><path d="M13 37 H36"/></g><circle cx="33" cy="10" r="7.5" fill="#5FB865"/></svg>
<svg style="left:2872px;top:418px" width="48" height="50"><g class="ic" stroke-width="2.4"><path d="M14 13 Q14 4 22 4 H34 Q40 4 40 10 V19 Q40 25 34 25 H22 Q14 25 14 18 Z"/><path d="M12 12 H8 Q4 12 4 16 V40 L10 34 H24"/></g><path d="M35 25 Q36.5 34 45 36 Q36.5 38 35 47 Q33.5 38 25 36 Q33.5 34 35 25 Z" fill="#CED0D6"/></svg>
<div class="a" style="left:88px;top:1400px;width:2764px;height:2px;background:#222327"></div>
<div class="a" style="left:88px;top:1480px;width:2764px;height:2px;background:#232427"></div>
<div class="a ui" style="left:112px;top:1419px;font-weight:bold;letter-spacing:-0.3px">Build</div>
<div class="a ui" style="left:230px;top:1419px;letter-spacing:0.45px">Sync</div>
<svg style="left:314px;top:1434px" width="16" height="16"><path d="M1.5 1.5 L14.5 14.5 M14.5 1.5 L1.5 14.5" stroke="#868A91" stroke-width="2.2" stroke-linecap="round"/></svg>
<div class="a ui" style="left:376px;top:1419px;letter-spacing:0.45px">Build Output</div>
<svg style="left:552px;top:1434px" width="16" height="16"><path d="M1.5 1.5 L14.5 14.5 M14.5 1.5 L1.5 14.5" stroke="#868A91" stroke-width="2.2" stroke-linecap="round"/></svg>
<div class="a ui" style="left:614px;top:1419px;letter-spacing:0.45px">Build Analyzer</div>
<svg style="left:812px;top:1434px" width="16" height="16"><path d="M1.5 1.5 L14.5 14.5 M14.5 1.5 L1.5 14.5" stroke="#868A91" stroke-width="2.2" stroke-linecap="round"/></svg>
<div class="a" style="left:206px;top:1477px;width:146px;height:6px;border-radius:3px;background:#6F737A"></div>
<svg style="left:2750px;top:1424px" width="16" height="34"><g fill="#CED0D6"><circle cx="8" cy="7" r="2.6"/><circle cx="8" cy="17" r="2.6"/><circle cx="8" cy="27" r="2.6"/></g></svg>
<svg style="left:2794px;top:1436px" width="32" height="10"><path class="ic" d="M3 5 H29"/></svg>
<svg style="left:108px;top:1503px" width="36" height="34"><g class="ic" stroke-width="2.4"><path d="M5 15 Q7 6 17 6 Q24 6 28 11 M31 19 Q29 28 19 28 Q12 28 8 23"/><path d="M29 4 V11.5 H22 M7 30 V22.5 H14"/></g></svg>
<div class="a" style="left:114px;top:1559px;width:25px;height:25px;border-radius:3px;background:#5A5D63"></div>
<svg style="left:110px;top:1606px" width="32" height="36"><g class="ic" stroke-width="2.4"><path d="M10 4 H22 M12 4 V14 L7 20 H25 L20 14 V4 M16 20 V31"/></g></svg>
<svg style="left:108px;top:1660px" width="40" height="36"><g class="ic" stroke-width="2.4"><path d="M3 16 Q10 5 17.5 5 Q25 5 32 16 Q25 27 17.5 27 Q10 27 3 16 Z"/><circle cx="17.5" cy="16" r="5"/></g><path d="M29 33 L35 33 L35 27 Z" fill="#CED0D6"/></svg>
<div class="a" style="left:170px;top:1482px;width:516px;height:949px;overflow:hidden">
<svg style="left:20px;top:17px" width="32" height="32"><use href="#chD"/></svg>
<svg style="left:62px;top:17px" width="32" height="32"><use href="#warn"/></svg>
<div class="a ui" style="left:100px;top:9px;letter-spacing:0.2px"><b style="letter-spacing:-0.3px">llama.android:</b> finished</div>
<div class="a ui" style="left:306px;top:9px;width:300px;background:#2B2D30;color:#868A91;letter-spacing:-0.7px;padding-left:7px">22 sec, 583 ms</div>
<svg style="left:100px;top:66px" width="32" height="32"><g class="ic" stroke-width="2.2"><path d="M16 3 V20 M9 13 L16 20 L23 13 M4 20 V28 H28 V20"/></g></svg>
<div class="a ui" style="left:139px;top:57px;letter-spacing:0.45px">Download info</div>
<svg style="left:58px;top:113px" width="32" height="32"><use href="#chD"/></svg>
<svg style="left:100px;top:113px" width="32" height="32"><use href="#kt"/></svg>
<div class="a ui" style="left:139px;top:105px;letter-spacing:0.45px">build.gradle.kts<span style="color:#868A91"> app 1 warning</span></div>
<svg style="left:138px;top:161px" width="32" height="32"><use href="#warn"/></svg>
<div class="a ui" style="left:177px;top:153px;letter-spacing:0.45px">'jvmTarget: String' is deprecated</div>
<svg style="left:138px;top:209px" width="32" height="32"><circle cx="16" cy="16" r="14" fill="#548AF7"/><path d="M16 14 V23" stroke="#fff" stroke-width="3" stroke-linecap="round"/><circle cx="16" cy="9" r="2" fill="#fff"/></svg>
<div class="a ui" style="left:177px;top:201px;letter-spacing:0.45px">BuildType 'debug' is both debuggable</div>
</div>
<div class="a" style="left:686px;top:1482px;width:2090px;height:949px;overflow:hidden">
<div class="a mono" style="left:27.5px;top:-27.0px;color:#C4C6CB">C/C++: -- Using KleidiAI optimized kernels if applicable</div>
<div class="a mono" style="left:27.5px;top:25.0px;color:#C4C6CB">C/C++: -- Adding CPU backend variant ggml-cpu-android_armv9.0_1: -march=armv8.6-a+dotprod+fp16+i8mm+sve2 GGML_USE_DOTPROD GGML_USE_FP16</div>
<div class="a mono" style="left:27.5px;top:77.0px;color:#C4C6CB">C/C++: -- ARM detected</div>
<div class="a mono" style="left:27.5px;top:129.0px;color:#C4C6CB">C/C++: -- Checking for ARM features using flags:</div>
<div class="a mono" style="left:27.5px;top:181.0px;color:#C4C6CB">C/C++: --   -march=armv9.2-a+dotprod+fp16+i8mm+sme</div>
<div class="a mono" style="left:27.5px;top:233.0px;color:#C4C6CB">C/C++: -- Using KleidiAI optimized kernels if applicable</div>
<div class="a mono" style="left:27.5px;top:285.0px;color:#C4C6CB">C/C++: -- Adding CPU backend variant ggml-cpu-android_armv9.2_1: -march=armv9.2-a+dotprod+fp16+i8mm+sme GGML_USE_DOTPROD GGML_USE_FP16</div>
<div class="a mono" style="left:27.5px;top:337.0px;color:#C4C6CB">C/C++: -- ARM detected</div>
<div class="a mono" style="left:27.5px;top:389.0px;color:#C4C6CB">C/C++: -- Checking for ARM features using flags:</div>
<div class="a mono" style="left:27.5px;top:441.0px;color:#C4C6CB">C/C++: --   -march=armv9.2-a+dotprod+fp16+sve+i8mm+sme</div>
<div class="a mono" style="left:27.5px;top:493.0px;color:#C4C6CB">C/C++: -- Using KleidiAI optimized kernels if applicable</div>
<div class="a mono" style="left:27.5px;top:545.0px;color:#C4C6CB">C/C++: -- Adding CPU backend variant ggml-cpu-android_armv9.2_2: -march=armv9.2-a+dotprod+fp16+sve+i8mm+sme GGML_USE_DOTPROD</div>
<div class="a mono" style="left:27.5px;top:597.0px;color:#C4C6CB">C/C++: -- ggml version: 0.9.4</div>
<div class="a mono" style="left:27.5px;top:649.0px;color:#C4C6CB">C/C++: -- ggml commit:  0a0bba05e</div>
<div class="a mono" style="left:27.5px;top:701.0px;color:#C4C6CB">C/C++: -- Configuring done (0.7s)</div>
<div class="a mono" style="left:27.5px;top:753.0px;color:#C4C6CB">C/C++: -- Generating done (0.1s)</div>
<div class="a mono" style="left:27.5px;top:805.0px;color:#C4C6CB">C/C++: -- Build files have been written to: <span style="color:#6F97EC;text-decoration:underline;text-underline-offset:2px;text-decoration-thickness:2px">/Users/hanyin/Workspace/ai-chat/examples/llama.android/lib/.cxx/Release/x86</span></div>
<div class="a mono" style="left:27.5px;top:857.0px;color:#C4C6CB"></div>
<div class="a mono" style="left:27.5px;top:909.0px;color:#C4C6CB">BUILD SUCCESSFUL in 21s</div>
</div>
<div class="a" style="left:2776px;top:1482px;width:76px;height:949px;background:#2B2D30"></div>
<svg style="left:2796px;top:1508px" width="36" height="34"><g class="ic" stroke-width="2.2"><path d="M3 3 H31 M3 11 H31 M3 19 H9"/><path d="M20 15 L15 19.5 L20 24 M15.5 19.5 H27 Q31 19.5 31 15.5 Q31 11.5 27 11.5"/></g></svg>
<svg style="left:2796px;top:1558px" width="36" height="34"><g class="ic" stroke-width="2.2"><path d="M3 4 H9 M3 12 H9 M3 27 H31 M22 3 V21 M15 14 L22 21 L29 14"/></g></svg>
<svg style="left:2796px;top:1606px" width="36" height="36"><g class="ic" stroke-width="2.2"><path d="M4 8 H30 M12 8 V5 Q12 3 14 3 H20 Q22 3 22 5 V8 M7 8 V30 Q7 33 10 33 H24 Q27 33 27 30 V8 M14 15 V26 M20 15 V26"/></g></svg>
<div class="a" style="left:34px;top:2454px;width:16px;height:15px;border:2.2px solid #6D8EE8;border-radius:3px;background:#25324D"></div>
<div class="a ui" style="left:58px;top:2437px;color:#A8ADB5;letter-spacing:0.45px">llama.android</div>
<svg style="left:240px;top:2450px" width="16" height="20"><path d="M3 2 L11 10 L3 18" fill="none" stroke="#A8ADB5" stroke-width="2.2" stroke-linecap="round" stroke-linejoin="round"/></svg>
<div class="a" style="left:272px;top:2454px;width:16px;height:15px;border:2.2px solid #6D8EE8;border-radius:3px;background:#25324D"></div>
<div class="a ui" style="left:296px;top:2437px;color:#A8ADB5;letter-spacing:0.45px">lib</div>
<svg style="left:342px;top:2450px" width="16" height="20"><path d="M3 2 L11 10 L3 18" fill="none" stroke="#A8ADB5" stroke-width="2.2" stroke-linecap="round" stroke-linejoin="round"/></svg>
<div class="a ui" style="left:374px;top:2437px;color:#A8ADB5;letter-spacing:0.45px">src</div>
<svg style="left:429px;top:2450px" width="16" height="20"><path d="M3 2 L11 10 L3 18" fill="none" stroke="#A8ADB5" stroke-width="2.2" stroke-linecap="round" stroke-linejoin="round"/></svg>
<div class="a" style="left:460px;top:2454px;width:16px;height:15px;border:2.2px solid #6D8EE8;border-radius:3px;background:#25324D"></div>
<div class="a ui" style="left:484px;top:2437px;color:#A8ADB5;letter-spacing:0.45px">main</div>
<svg style="left:561px;top:2450px" width="16" height="20"><path d="M3 2 L11 10 L3 18" fill="none" stroke="#A8ADB5" stroke-width="2.2" stroke-linecap="round" stroke-linejoin="round"/></svg>
<div class="a ui" style="left:591px;top:2437px;color:#A8ADB5;letter-spacing:0.45px">cpp</div>
<svg style="left:656px;top:2450px" width="16" height="20"><path d="M3 2 L11 10 L3 18" fill="none" stroke="#A8ADB5" stroke-width="2.2" stroke-linecap="round" stroke-linejoin="round"/></svg>
<svg style="left:688px;top:2445px" width="34" height="34"><use href="#cpp" width="34" height="34"/></svg>
<div class="a ui" style="left:727px;top:2437px;color:#A8ADB5;letter-spacing:0.2px">ai_chat.cpp</div>
<div class="a ui" style="left:1914px;top:2437px;color:#A8ADB5;letter-spacing:0.3px">9:21</div>
<div class="a ui" style="left:1999px;top:2437px;color:#A8ADB5;letter-spacing:0.3px">LF</div>
<div class="a ui" style="left:2061px;top:2437px;color:#A8ADB5;letter-spacing:0.1px">UTF-8</div>
<div class="a ui" style="left:2174px;top:2437px;color:#A8ADB5;letter-spacing:0.45px">.clang-tidy</div>
<svg style="left:2340px;top:2444px" width="34" height="32"><g fill="none" stroke="#A8ADB5" stroke-width="2.4" stroke-linecap="round"><path d="M3 10 H16 M3 18 H14 M3 26 H10"/><circle cx="25" cy="9" r="6"/><path d="M21 13 L29 5"/></g></svg>
<svg style="left:2406px;top:2442px" width="32" height="36"><g fill="none" stroke="#A8ADB5" stroke-width="2.2" stroke-linejoin="round"><path d="M13 31 H5 Q3 31 3 29 V8 L9 3 H19 Q21 3 21 5 V14"/><circle cx="21" cy="24" r="5"/><path d="M21 15 V18 M21 30 V33 M12 24 H15 M27 24 H30"/></g></svg>
<div class="a ui" style="left:2442px;top:2437px;color:#A8ADB5;letter-spacing:0.45px">4 spaces</div>
<div class="a ui" style="left:2586px;top:2437px;color:#7D8188;letter-spacing:0.6px">Context:  None</div>
<svg style="left:2806px;top:2446px" width="32" height="30"><g fill="none" stroke="#A8ADB5" stroke-width="2.2"><rect x="2.5" y="12.5" width="17" height="13" rx="2"/><path d="M20 12 V8 Q20 3 25 3 Q30 3 30 8"/><path d="M11 17 V21" stroke-linecap="round"/></g></svg>
<svg style="left:2866px;top:2446px" width="32" height="32"><g fill="none" stroke="#CED0D6" stroke-width="2.2"><circle cx="16" cy="16" r="13.5"/><path d="M16 9 V18" stroke-linecap="round" stroke-width="3"/></g><circle cx="16" cy="22.5" r="1.8" fill="#CED0D6"/></svg>
<!--CONTENT-->
</div>
<div id="frame"></div>
</body></html>
